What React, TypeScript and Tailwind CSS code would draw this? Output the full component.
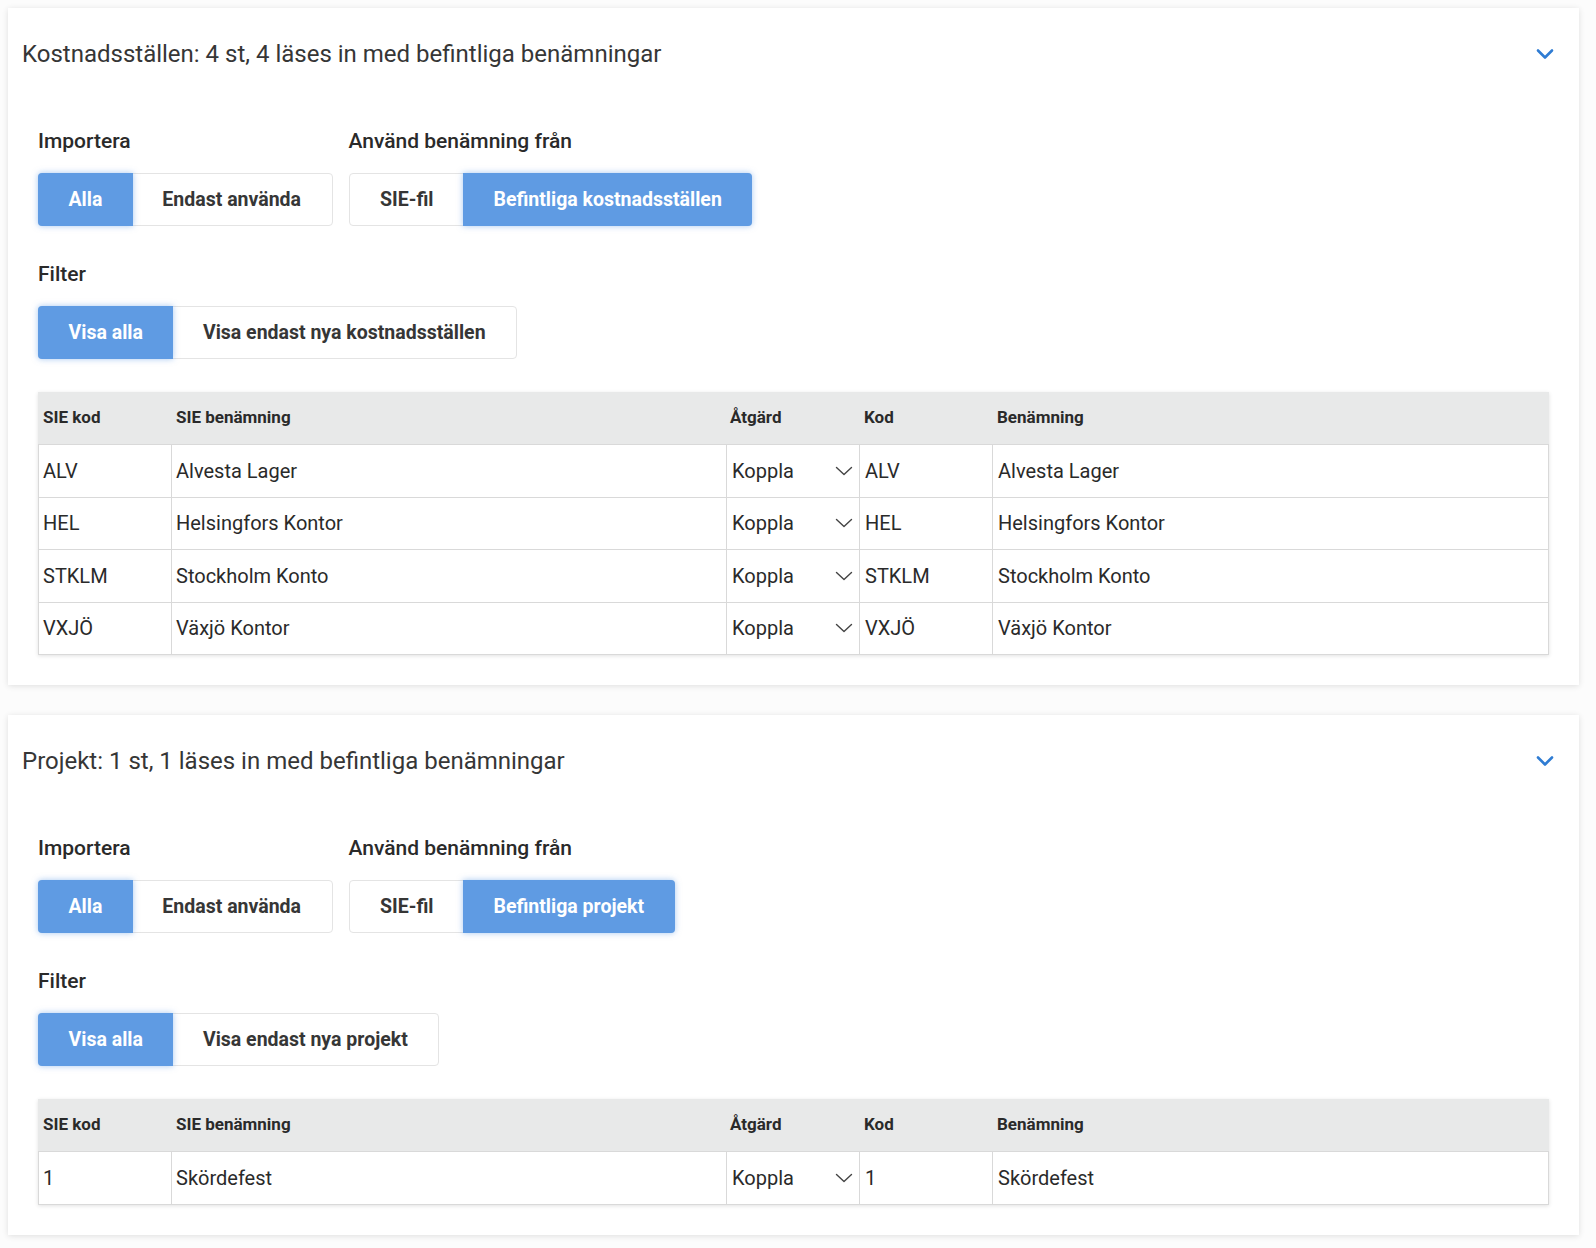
import React from "react";

type Row = { sieKod: string; sieNamn: string; kod: string; namn: string };

function Chevron() {
  return (
    <svg width="18" height="12" viewBox="0 0 18 12" fill="none">
      <path d="M2 2.5 L9 9.5 L16 2.5" stroke="#2f7cd3" strokeWidth="2.6" strokeLinecap="round" strokeLinejoin="round" />
    </svg>
  );
}

function SmallChevron() {
  return (
    <svg width="18" height="10" viewBox="0 0 18 10" fill="none">
      <path d="M1.5 1.5 L9 8.5 L16.5 1.5" stroke="#444" strokeWidth="1.4" strokeLinecap="round" strokeLinejoin="round" />
    </svg>
  );
}

function Seg({ items, active }: { items: string[]; active: number }) {
  return (
    <div className="inline-flex h-[53px] rounded-[4px] border border-[#e4e4e4] bg-white">
      {items.map((t, i) =>
        i === active ? (
          <div
            key={t}
            className={`-m-px flex h-[53px] items-center bg-[#5f9be3] px-[30.5px] text-[19.5px] font-bold text-white shadow-[0_0_6px_rgba(95,155,227,0.55)] ${i === 0 ? "rounded-l-[4px]" : ""} ${i === items.length - 1 ? "rounded-r-[4px]" : ""}`}
          >
            {t}
          </div>
        ) : (
          <div key={t} className="flex items-center px-[30.5px] text-[19.5px] font-bold text-[#363636]">
            {t}
          </div>
        )
      )}
    </div>
  );
}

function Section({ title, existing, filterNew, rows }: { title: string; existing: string; filterNew: string; rows: Row[] }) {
  return (
    <div className="ml-[8px] w-[1571px] bg-white shadow-[0_1px_6px_rgba(0,0,0,0.12)]">
      <div className="flex h-[90px] items-center justify-between pl-[14px] pr-[25px] pt-[1px]">
        <div className="text-[24px] text-[#363636]">{title}</div>
        <Chevron />
      </div>
      <div className="px-[30px] pb-[30px]">
        <div className="mt-[30px] flex gap-[16px]">
          <div className="flex flex-col">
            <div className="mb-[18px] text-[21px] font-medium leading-[27px] text-[#2a2a2a]">Importera</div>
            <Seg items={["Alla", "Endast använda"]} active={0} />
          </div>
          <div className="flex flex-col">
            <div className="mb-[18px] text-[21px] font-medium leading-[27px] text-[#2a2a2a]">Använd benämning från</div>
            <Seg items={["SIE-fil", existing]} active={1} />
          </div>
        </div>
        <div className="mt-[35px] flex flex-col">
          <div className="mb-[18px] text-[21px] font-medium leading-[27px] text-[#2a2a2a]">Filter</div>
          <div>
            <Seg items={["Visa alla", filterNew]} active={0} />
          </div>
        </div>
        <div className="mt-[33px] shadow-[0_1px_4px_rgba(0,0,0,0.12)]">
          <div className="grid h-[53px] grid-cols-[133px_555px_133px_133px_1fr] items-center border-b border-[#d9d9d9] bg-[#e8e9e9] text-[17px] font-bold text-[#2a2a2a]">
            <div className="pl-[5px]">SIE kod</div>
            <div className="pl-[5px]">SIE benämning</div>
            <div className="pl-[4px]">Åtgärd</div>
            <div className="pl-[5px]">Kod</div>
            <div className="pl-[5px]">Benämning</div>
          </div>
          {rows.map((r) => (
            <div
              key={r.sieKod}
              className="grid h-[52.5px] grid-cols-[132px_555px_133px_133px_1fr] border-b border-x border-[#d9d9d9] text-[20px] text-[#2a2a2a]"
            >
              <div className="flex items-center pl-[4px]">{r.sieKod}</div>
              <div className="flex items-center border-l border-[#d9d9d9] pl-[4px]">{r.sieNamn}</div>
              <div className="flex items-center justify-between border-l border-[#d9d9d9] pl-[5px] pr-[6px]">
                <span>Koppla</span>
                <SmallChevron />
              </div>
              <div className="flex items-center border-l border-[#d9d9d9] pl-[5px]">{r.kod}</div>
              <div className="flex items-center border-l border-[#d9d9d9] pl-[5px]">{r.namn}</div>
            </div>
          ))}
        </div>
      </div>
    </div>
  );
}

export default function App() {
  return (
    <div className="min-h-[1248px] bg-[#fcfcfc] pt-[8px] pb-[14px]" style={{ fontFamily: "Roboto, 'Liberation Sans', sans-serif" }}>
      <Section
        title="Kostnadsställen: 4 st, 4 läses in med befintliga benämningar"
        existing="Befintliga kostnadsställen"
        filterNew="Visa endast nya kostnadsställen"
        rows={[
          { sieKod: "ALV", sieNamn: "Alvesta Lager", kod: "ALV", namn: "Alvesta Lager" },
          { sieKod: "HEL", sieNamn: "Helsingfors Kontor", kod: "HEL", namn: "Helsingfors Kontor" },
          { sieKod: "STKLM", sieNamn: "Stockholm Konto", kod: "STKLM", namn: "Stockholm Konto" },
          { sieKod: "VXJÖ", sieNamn: "Växjö Kontor", kod: "VXJÖ", namn: "Växjö Kontor" },
        ]}
      />
      <div className="h-[30px]" />
      <Section
        title="Projekt: 1 st, 1 läses in med befintliga benämningar"
        existing="Befintliga projekt"
        filterNew="Visa endast nya projekt"
        rows={[{ sieKod: "1", sieNamn: "Skördefest", kod: "1", namn: "Skördefest" }]}
      />
    </div>
  );
}
